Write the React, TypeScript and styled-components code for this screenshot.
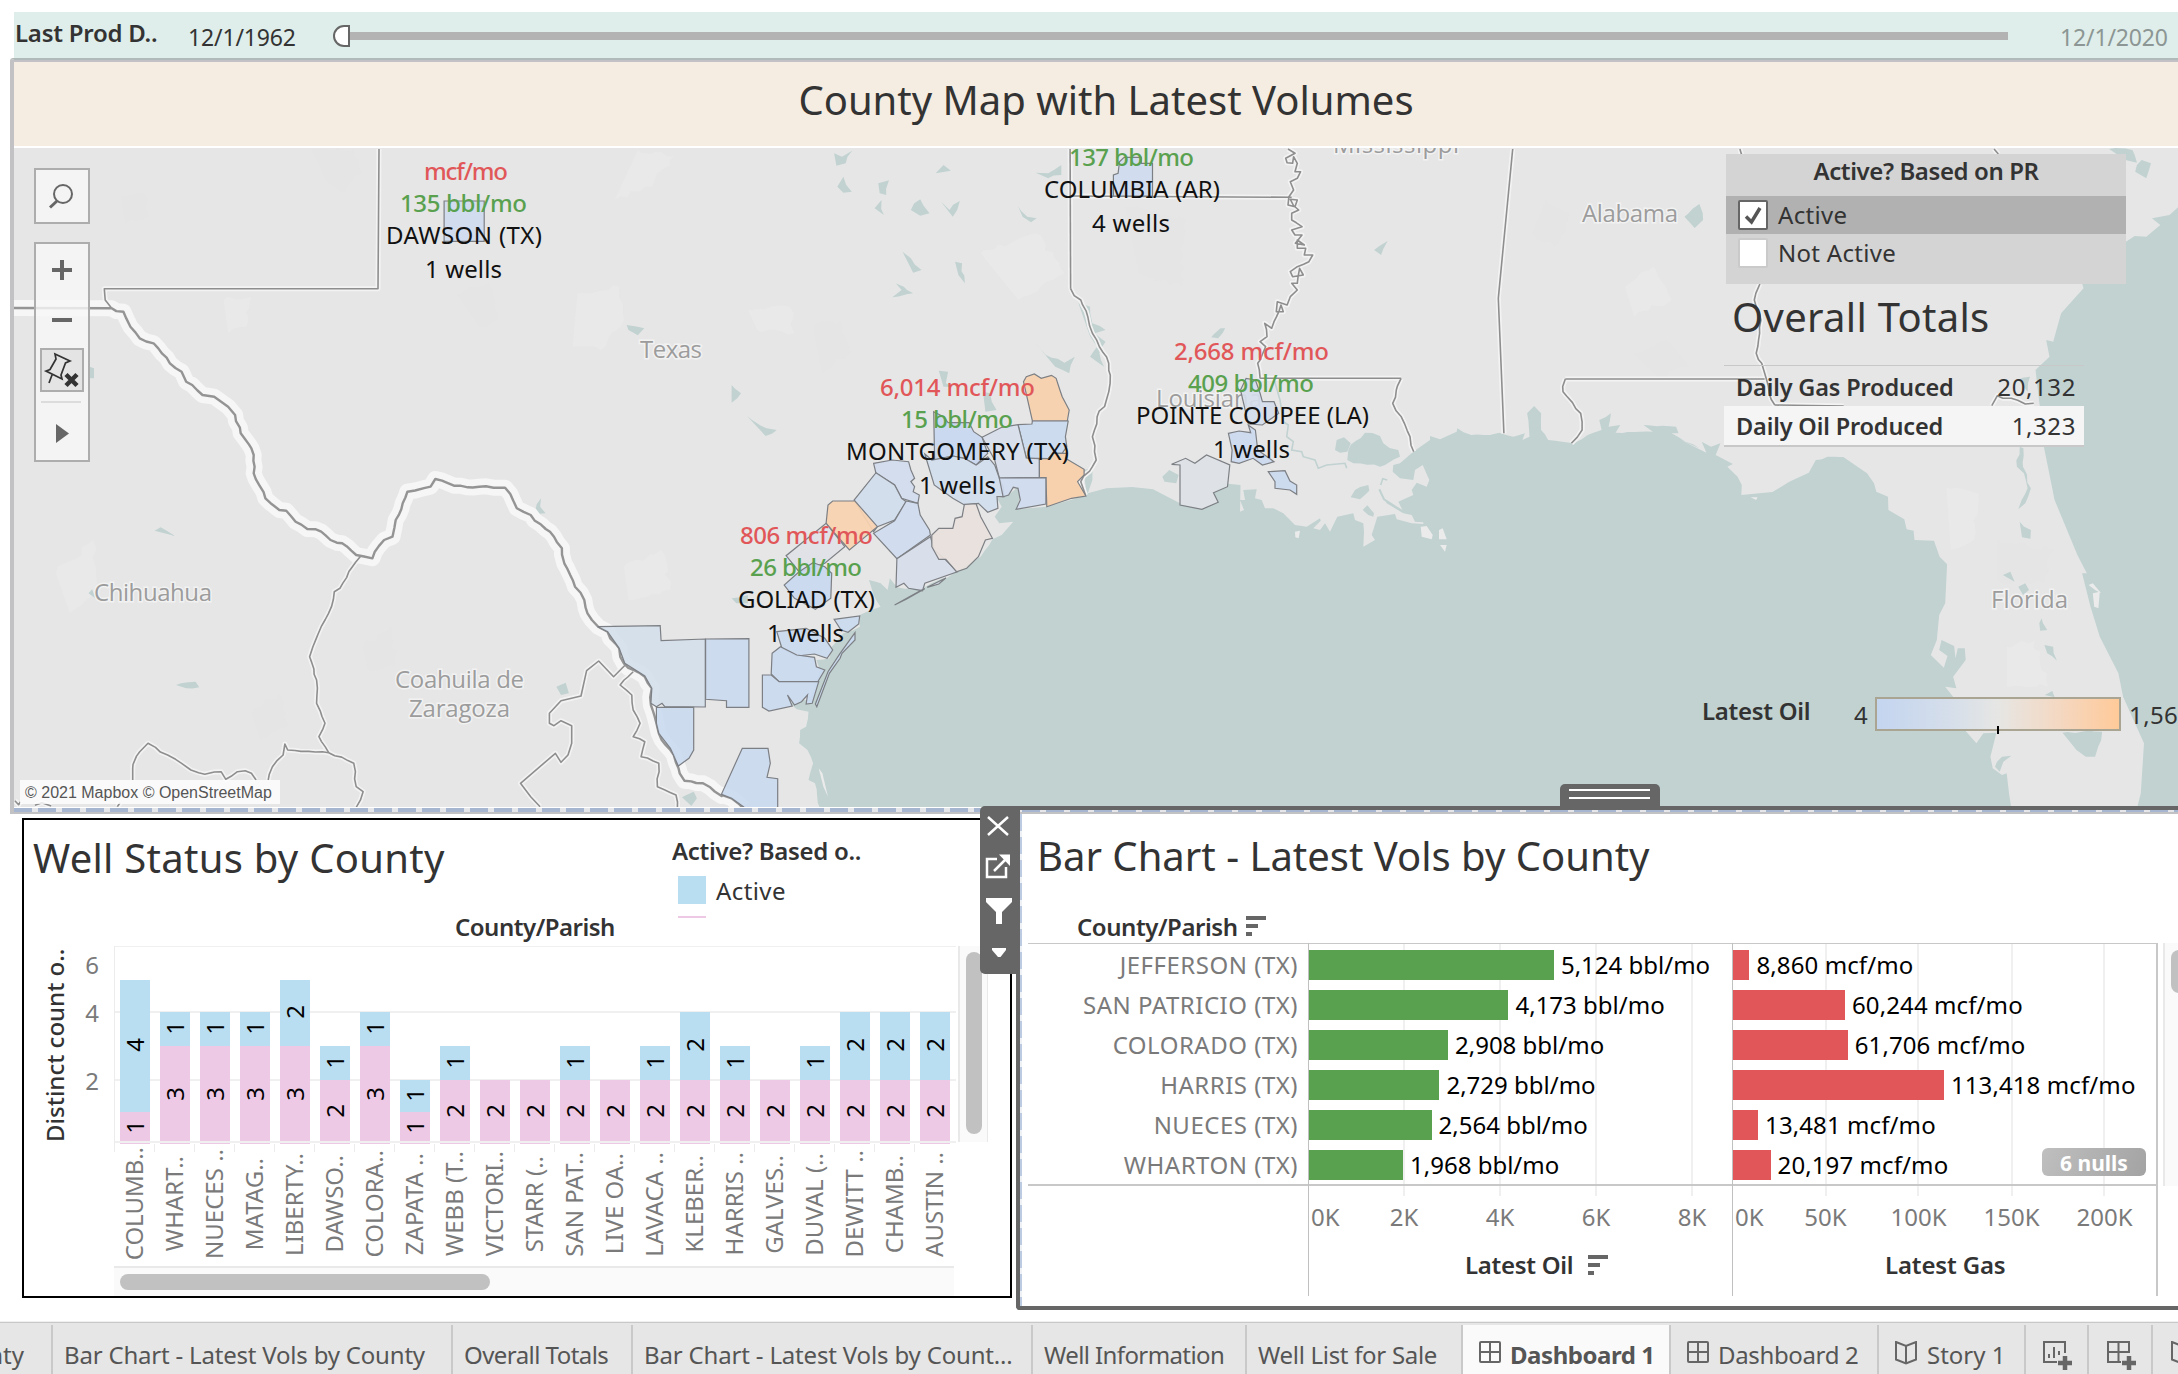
import React from "react";
import styled, { createGlobalStyle } from "styled-components";

const FONT = '"Noto Sans", "Open Sans", sans-serif';

const GlobalStyle = createGlobalStyle`
  * { box-sizing: border-box; }
  html, body { margin: 0; padding: 0; background: #fff; overflow: hidden; }
  body { font-family: ${FONT}; color: #333; font-size: 24px; line-height: 32px; white-space: nowrap; }
  svg { display: block; }
`;

/* ---------- data ---------- */

const wells: { name: string; off: number; on: number }[] = [
  { name: "COLUMB..", off: 1, on: 4 },
  { name: "WHART..", off: 3, on: 1 },
  { name: "NUECES ..", off: 3, on: 1 },
  { name: "MATAG..", off: 3, on: 1 },
  { name: "LIBERTY..", off: 3, on: 2 },
  { name: "DAWSO..", off: 2, on: 1 },
  { name: "COLORA..", off: 3, on: 1 },
  { name: "ZAPATA ..", off: 1, on: 1 },
  { name: "WEBB (T..", off: 2, on: 1 },
  { name: "VICTORI..", off: 2, on: 0 },
  { name: "STARR (..", off: 2, on: 0 },
  { name: "SAN PAT..", off: 2, on: 1 },
  { name: "LIVE OA..", off: 2, on: 0 },
  { name: "LAVACA ..", off: 2, on: 1 },
  { name: "KLEBER..", off: 2, on: 2 },
  { name: "HARRIS ..", off: 2, on: 1 },
  { name: "GALVES..", off: 2, on: 0 },
  { name: "DUVAL (..", off: 2, on: 1 },
  { name: "DEWITT ..", off: 2, on: 2 },
  { name: "CHAMB..", off: 2, on: 2 },
  { name: "AUSTIN ..", off: 2, on: 2 },
];
const LEVEL = [0, 32, 64, 98, 132, 164];

const volumes = [
  { name: "JEFFERSON (TX)", oil: 5124, gas: 8860 },
  { name: "SAN PATRICIO (TX)", oil: 4173, gas: 60244 },
  { name: "COLORADO (TX)", oil: 2908, gas: 61706 },
  { name: "HARRIS (TX)", oil: 2729, gas: 113418 },
  { name: "NUECES (TX)", oil: 2564, gas: 13481 },
  { name: "WHARTON (TX)", oil: 1968, gas: 20197 },
];

/* ---------- map geometry ---------- */

const SX = 730 / 1568;
const SY = 1 / 3;
type Pt = [number, number];

const tile = (ox: number, oy: number, sx = SX, sy = SY) => (s: string): Pt[] =>
  s.trim().split(/\s+/).map((p) => {
    const [x, y] = p.split(",").map(Number);
    return [ox + x * sx, oy + y * sy] as Pt;
  });
const west = tile(0, 0);
const mid = tile(720, 0);
const east = tile(1448, 0);
const mexico = tile(0, 440);
const gulf = tile(720, 350);
const florida = tile(1448, 440);
const delta = tile(1240, 400, SY, SY);

const rough = (pts: Pt[], amp: number, seed = 7): Pt[] => {
  let s = seed;
  const rnd = () => {
    s = (s * 16807) % 2147483647;
    return s / 2147483647 - 0.5;
  };
  const out: Pt[] = [];
  pts.forEach((p, i) => {
    out.push(p);
    const q = pts[i + 1];
    if (!q) return;
    const len = Math.hypot(q[0] - p[0], q[1] - p[1]);
    const n = Math.min(12, Math.floor(len / 6));
    for (let k = 1; k < n; k++) {
      const t = k / n;
      out.push([p[0] + (q[0] - p[0]) * t + rnd() * amp, p[1] + (q[1] - p[1]) * t + rnd() * amp]);
    }
  });
  return out;
};
const str = (pts: Pt[]) => pts.map(([x, y]) => `${x.toFixed(1)},${y.toFixed(1)}`).join(" ");

const gulfWater: Pt[] = [
  ...rough(gulf("215,1375 204,1300 190,1290 200,1240 188,1200 170,1180 172,1140 185,1130 190,1085 165,1078 150,1060 190,1050 205,1000 215,960 207,930 235,925 240,890 265,850 300,830 300,795 345,770 330,735 320,690 345,700 360,720 365,685 380,712 430,718 500,672 560,620 585,568"), 2),
  ...gulf("605,555 630,515 600,520 590,500 605,470 595,445 620,435 640,410 645,440 636,478 702,470"),
  ...gulf("785,437 785,405 780,360 800,355 800,390 790,430 830,415 885,411 930,418 988,460 1035,478 1070,455 1060,428 1080,400 1118,405"),
  ...delta("0,335 12,330 0,300 15,300 10,270 50,268 45,295 65,300 75,325 100,325 130,340 165,375 200,380 240,355 242,362 220,385 240,390 255,370 270,395 292,350 340,340 345,360 370,370 372,395 370,440 405,420 395,405 412,350 465,342 470,358 515,370 550,372 550,367 525,365 515,345 490,340 440,310 418,268 432,298 490,335 475,305 520,285 515,270 530,248 560,260 568,240 548,195 525,210 520,240 480,235 458,215 460,195 480,190 520,155 570,120 570,108 600,118 650,95"),
  ...rough(east("20,1285 50,1305 90,1305 110,1298 140,1310 165,1300 160,1320 175,1310 170,1240 185,1218 200,1240 200,1290 215,1320 245,1325 270,1330 300,1305 330,1290 325,1260 350,1240 345,1280 370,1275 360,1298 440,1295 420,1275 490,1280 495,1300 480,1300 510,1325 540,1345"), 1.5),
  ...florida("500,0 555,38 545,5 565,20 585,10 575,45 612,72 600,80 622,110 631,135 630,165 697,156 733,125 775,98 790,60 850,52 900,100 915,130 920,155 945,170 946,210 980,238 985,268 1000,272 1002,300 1044,302 1056,350 1072,373 1068,490 1055,525 1050,600 1037,645 1065,683 1073,648 1055,630 1060,600 1087,618 1090,655 1095,625 1110,625 1112,660 1085,710 1092,745 1068,740 1085,770 1110,870 1135,910 1150,880 1178,878 1165,950 1170,985 1190,1005 1200,1000 1205,1060 1210,1105"),
];
const atlantic: Pt[] = [
  ...florida("1480,1105 1488,1060 1495,910 1450,770 1440,700 1400,590 1380,500 1362,400 1372,400 1352,345 1340,305 1303,180 1280,20"),
  ...east("1278,1300 1262,1110 1292,1070 1285,1020 1300,1025 1317,940 1365,865 1362,850 1400,780 1456,725 1475,708 1500,710 1530,675 1512,655 1550,645 1568,622"),
  [2190, 207], [2190, 812],
];

const lakes: Pt[][] = [
  mid("245,460 262,470 284,452 270,490 250,497"), mid("463,520 480,495 496,512"),
  mid("252,560 265,530 283,575 265,578"), mid("340,550 363,541 357,585 343,580"),
  mid("332,625 347,600 352,645"), mid("410,630 430,598 450,640 430,647"),
  mid("475,605 493,630 515,603 500,650"), mid("640,618 660,650 680,655 668,667 650,650"),
  mid("678,518 705,520 733,495 733,525 705,535"), mid("392,755 410,775 433,810 415,818"),
  mid("370,838 415,880 370,892 390,870"), mid("505,785 520,790 526,850 512,825"),
  mid("675,1025 700,1065 740,1088 762,1070 750,1120 720,1100"), mid("770,910 795,920 800,970 828,990 805,1000 828,1025 815,1060 825,1100 795,1070 810,1040 790,990"),
  mid("25,1155 45,1180 25,1208"), mid("58,1248 100,1285 122,1290 98,1308"),
  mid("565,1175 580,1180 594,1230 570,1235"), mid("1405,750 1434,723 1420,765"),
  mid("1055,1012 1075,985 1085,985 1070,1015"), mid("470,1112 490,1115 485,1150 500,1160 480,1160"),
  delta("322,180 325,150 375,98 420,108 430,130 475,150 480,170 435,195 420,200 340,190"),
  delta("285,150 290,120 312,112 332,130 322,155 300,158"),
  delta("332,292 345,270 385,255 388,272 360,298"), delta("368,330 382,316 402,340 400,350 385,345"),
  gulf("950,380 965,360 985,375 980,400 955,395"), gulf("25,745 60,735 60,760 35,760"),
  west("1346,975 1370,980 1384,985 1370,1006 1350,990"), west("192,1100 202,1105 202,1135 192,1135"),
  mexico("332,272 345,262 376,288"), mexico("378,735 420,725 428,742 400,745"),
  mexico("1195,740 1215,728 1222,760 1205,765"), mexico("1150,210 1162,175 1160,200 1172,220 1150,222"),
  mexico("1465,1072 1490,1055 1497,1075 1485,1098"), mexico("190,460 198,448 205,475"),
  east("508,650 540,612 548,660 530,684"), east("1420,447 1470,450 1480,488 1455,480"), east("1476,515 1490,480 1510,490 1500,535"),
  east("1225,1140 1250,1130 1245,1175"), east("800,1380 815,1370 850,1372 848,1380"),
  florida("1222,80 1228,20 1236,25 1235,80 1252,145 1240,190 1225,208 1232,180 1245,145 1237,100"),
  florida("1228,245 1252,270 1251,296 1233,292"), florida("1192,405 1208,395 1217,425"),
  florida("1225,440 1240,430 1248,450 1235,465"), florida("1270,550 1275,535 1287,570 1272,572"),
  florida("1281,615 1300,620 1308,662 1287,640"), florida("1320,878 1405,875 1403,900 1390,950 1370,950 1350,930"),
  florida("1175,980 1190,950 1210,947 1193,965 1185,995"), florida("1282,765 1298,753 1303,772"),
];
const islets: Pt[][] = [
  gulf("212,1255 220,1270 232,1340 222,1310"), florida("1376,435 1385,430 1403,460 1390,450"),
  florida("1385,460 1400,455 1397,505 1388,500"), florida("650,172 665,172 662,180"),
  delta("542,380 560,378 578,405 575,418 545,410"), delta("597,390 608,385 620,418 597,418"),
  delta("600,435 620,435 615,455"), delta("165,395 180,392 176,415 166,412"),
];

const rio = rough(
  [
    ...west("32,925 240,925 265,935 280,980 300,1015 330,1030 365,1090 390,1115 400,1145 435,1185 460,1190 490,1220 505,1245 517,1300 540,1345"),
    ...mexico("545,45 545,100 570,175 600,210 615,212 635,245 660,267 690,275 710,300 735,310 765,345 800,355 805,335 825,300 843,290 850,240 865,190 875,155 925,140 935,117 975,137 1060,143 1085,143 1110,205 1140,225 1190,290 1207,325 1212,370 1235,440 1255,480 1262,520 1285,560 1305,575 1330,625 1340,670 1385,710 1400,745 1398,795 1410,850 1415,880 1440,930 1460,1000 1470,1022 1510,1030 1550,1068"),
    ...gulf("5,1335 25,1345 50,1375"),
  ].slice(1),
  2.5
);

const borders: Pt[][] = [
  west("814,447 812,866 224,866 226,900 240,925"),
  mid("752,447 753,866"),
  rough([...mid("753,866 775,900 790,950 800,1000 815,1040 835,1090 838,1150 830,1200 810,1250 800,1310"), ...gulf("808,330 800,350 775,395 785,435")], 3),
  mid("753,588 1228,592"),
  rough(mid("1220,447 1235,460 1215,475 1218,488 1230,490 1232,470 1240,490 1235,515 1247,515 1240,535 1225,545 1232,570 1222,590 1220,615 1235,620 1240,600 1225,598 1243,630 1228,640 1228,660 1250,680 1228,690 1235,705 1250,705 1236,730 1255,735 1240,720 1240,745 1258,745 1255,765 1273,765 1265,785 1240,800 1225,815 1230,830 1253,825 1245,805 1240,850 1228,850 1240,870 1225,890 1218,915 1197,905 1195,935 1210,935 1205,915 1190,965 1185,985 1170,970 1175,1010 1160,1025 1172,1040 1160,1080 1155,1090 1160,1135"), 2),
  mid("1160,1135 1463,1135"),
  rough(mid("1463,1135 1445,1210 1470,1270 1490,1355"), 3),
  east("139,447 108,895 120,1300"),
  east("627,447 632,470"),
  rough(east("670,852 658,900 672,960 662,1060 678,1110 690,1180 702,1215"), 2.5),
  east("702,1215 850,1218"),
  east("680,1137 252,1137"),
  rough(east("252,1137 247,1175 285,1240 288,1290 265,1330"), 3),
  rough(east("1168,1217 1180,1187 1210,1195 1240,1212 1258,1210"), 3),
  east("1173,447 1182,462"),
  rough(mexico("775,348 757,380 730,445 718,455 712,500 690,560 672,620 665,650 680,720 680,790 698,850 685,890 706,938"), 2),
  rough(mexico("576,1020 585,980 608,945 612,912 618,930 706,938 760,970 765,1040 780,1055 765,1102"), 2),
  rough(mexico("285,1020 285,985 300,935 318,910 360,945 390,970 410,990 440,1003 475,995 485,1018 510,995 540,1000 550,1020"), 4),
  mexico("1160,1100 1140,1070 1118,1030 1193,940 1205,967 1220,945 1228,910 1228,857 1205,842 1190,857 1180,850 1180,820 1205,782 1248,768 1260,692 1286,663 1318,710 1345,672"),
  rough(mexico("1360,695 1332,735 1357,765 1360,810 1375,850 1360,890 1385,905 1377,950 1415,970 1412,1040 1452,1065 1455,1102"), 2),
  mexico("252,1100 258,1088"),
  mexico("32,1082 40,1094 44,1085"),
  mexico("75,1096 90,1088 110,1098"),
];

const BLUE = "#cbdaf0";
const counties: { pts: Pt[]; fill: string }[] = [
  { pts: mexico("1284,560 1305,575 1330,625 1342,670 1385,708 1400,745 1398,790 1410,800 1422,790 1428,800 1515,801 1515,597 1420,602 1418,557"), fill: "#d5dfeb" },
  { pts: gulf("-31,867 62,866 62,1072 14,1072 14,1052 -31,1048"), fill: BLUE },
  { pts: mexico("1410,802 1490,802 1490,930 1480,955 1457,978 1440,925 1415,880 1410,850"), fill: BLUE },
  { pts: gulf("48,1195 103,1195 108,1240 101,1282 124,1286 124,1375 55,1375 25,1345 3,1333"), fill: BLUE },
  { pts: west("954,603 1040,603 1040,724 954,724"), fill: "#cfdcef" },
  { pts: mid("858,485 868,472 905,472 905,490 929,490 929,588 845,588 845,525 855,520"), fill: "#cfdcef" },
  { pts: gulf("652,95 658,80 675,72 690,85 712,76 722,85 730,120 735,140 750,180 746,213 671,213"), fill: "#f9d0ab" },
  { pts: gulf("640,224 670,222 671,213 748,213 742,260 745,290 735,310 715,310 705,326 658,324"), fill: BLUE },
  { pts: gulf("459,185 480,200 490,218 535,218 545,245 563,262 575,310 550,345 525,325 500,318 461,330"), fill: "#c8d8f0" },
  { pts: gulf("563,262 605,232 640,224 658,324 686,326 686,383 600,384 590,330"), fill: "#d8dfec" },
  { pts: gulf("440,312 455,330 500,318 525,325 550,345 575,320 590,345 600,384 608,410 610,440 595,440 597,475 575,487 555,460 525,465 500,445 460,405"), fill: "#d2deee" },
  { pts: gulf("686,326 705,326 715,310 745,310 742,325 782,358 782,375 768,395 786,438 755,445 702,470 700,383 686,383"), fill: "#f9cfa9" },
  { pts: gulf("600,384 700,383 700,462 636,478 645,450 640,415 630,412 620,435 608,440"), fill: "#cfdcef" },
  { pts: gulf("330,340 370,330 405,335 410,360 418,385 410,395 418,410 415,425 428,435 425,460 390,445 375,405 335,370"), fill: "#d1dcee" },
  { pts: gulf("335,368 375,405 390,445 400,455 375,510 338,530 330,545 288,450"), fill: "#d1ddee" },
  { pts: gulf("400,453 425,460 430,495 450,540 452,555 380,626 330,550 375,512"), fill: "#cfdcef" },
  { pts: gulf("242,453 290,453 338,530 278,600 228,520 232,465"), fill: "#f8d2b0" },
  { pts: gulf("228,520 268,590 225,640 170,665 142,617"), fill: "#e0e2e7" },
  { pts: gulf("200,638 225,650 240,670 238,745 205,778 160,745 138,705 170,665"), fill: "#c9d9f0" },
  { pts: gulf("380,626 452,560 460,600 485,630 510,665 440,700 435,722 405,715 395,700 378,712"), fill: "#d8ddeb" },
  { pts: gulf("525,463 550,461 560,500 585,565 570,570 555,620 530,655 508,665 485,628 470,628 455,590 455,555 470,535 500,535 505,505 520,500"), fill: "#e9e1dc" },
  { pts: gulf("245,808 300,798 298,822 275,847 260,840"), fill: BLUE },
  { pts: gulf("122,845 185,835 225,865 242,900 230,925 203,912 165,918 133,895"), fill: BLUE },
  { pts: gulf("112,910 130,890 165,915 203,922 207,950 225,960 210,995 127,995 110,972"), fill: BLUE },
  { pts: gulf("91,975 110,975 127,995 212,995 198,1060 185,1062 188,1035 175,1055 160,1065 145,1035 155,1068 105,1083 91,1072"), fill: BLUE },
  { pts: gulf("290,848 290,870 262,910 258,925 235,970 208,1070 205,1062 232,965 258,910"), fill: BLUE },
  { pts: gulf("375,765 430,722 440,716 400,748"), fill: "#d8ddeb" },
  { pts: gulf("445,712 485,684 470,702"), fill: "#d8ddeb" },
  { pts: gulf("970,343 1000,325 1020,340 1045,315 1095,345 1090,410 1060,428 1070,457 1035,478 988,465 988,345"), fill: "#dde2e6" },
  { pts: gulf("1118,120 1130,85 1150,90 1160,130 1165,155 1190,155 1200,190 1165,225 1135,222"), fill: "#d5ddec" },
  { pts: gulf("1092,250 1115,243 1140,248 1135,226 1150,240 1155,300 1190,335 1165,345 1145,325 1115,340 1098,335 1100,300"), fill: "#ccdaf0" },
  { pts: delta("85,215 135,212 150,243 170,255 170,283 150,270 105,265 105,245"), fill: "#cbdaf0" },
];

const relief: Pt[][] = [
  west("670,450 760,450 780,520 740,580 700,540"), west("1240,880 1330,860 1340,960 1290,1050 1230,1040"),
  west("260,590 310,580 320,650 270,670"), west("1370,450 1450,470 1400,560 1320,600"),
  west("980,880 1050,850 1070,960 1030,980"), west("480,900 540,890 530,980 490,1000"),
  mid("200,980 260,960 280,1060 220,1120"), mid("560,760 680,700 740,820 640,900"),
  mid("870,620 1000,660 990,860 900,820"), mid("60,930 150,920 160,1000 80,990"),
  east("210,600 260,640 230,740 180,700"), east("380,860 440,800 480,900 400,950"),
  east("400,1060 470,1020 520,1100 450,1130"), mexico("120,400 200,300 210,460 150,520"),
  mexico("780,620 840,560 850,680 790,690"), mexico("1340,380 1420,330 1440,450 1350,480"),
  mexico("540,820 600,760 620,860 560,900"), florida("1070,140 1140,160 1130,300 1080,330"),
  florida("1180,300 1300,330 1280,430 1180,420"), florida("1200,620 1260,600 1290,740 1200,740"),
];

const annotations: [string, number, number, number, string][] = [
  ["mcf/mo", 424, 508, 180, "#e15759"],
  ["135 bbl/mo", 400, 527, 212, "#59a14f"],
  ["DAWSON (TX)", 386, 542, 244, "#111"],
  ["1 wells", 425, 502, 278, "#111"],
  ["137 bbl/mo", 1069, 1194, 166, "#59a14f"],
  ["COLUMBIA (AR)", 1044, 1220, 198, "#111"],
  ["4 wells", 1092, 1170, 232, "#111"],
  ["2,668 mcf/mo", 1174, 1329, 360, "#e15759"],
  ["409 bbl/mo", 1188, 1314, 392, "#59a14f"],
  ["POINTE COUPEE (LA)", 1136, 1369, 424, "#111"],
  ["1 wells", 1213, 1290, 458, "#111"],
  ["6,014 mcf/mo", 880, 1035, 396, "#e15759"],
  ["15 bbl/mo", 901, 1013, 428, "#59a14f"],
  ["MONTGOMERY (TX)", 846, 1069, 460, "#111"],
  ["1 wells", 919, 996, 494, "#111"],
  ["806 mcf/mo", 740, 873, 544, "#e15759"],
  ["26 bbl/mo", 750, 862, 576, "#59a14f"],
  ["GOLIAD (TX)", 738, 875, 608, "#111"],
  ["1 wells", 767, 844, 642, "#111"],
];
const places: [string, number, number, number][] = [
  ["Texas", 640, 702, 358],
  ["Chihuahua", 94, 212, 601],
  ["Coahuila de", 395, 524, 688],
  ["Zaragoza", 409, 510, 717],
  ["Louisiana", 1156, 1262, 407],
  ["Alabama", 1582, 1678, 222],
  ["Mississippi", 1333, 1459, 153],
  ["Florida", 1991, 2068, 608],
];

const PlaceText = styled.text`
  font: 400 24px "Open Sans", "Noto Sans", sans-serif;
  fill: #9c9c9c;
  stroke: #f2f2f2;
  stroke-width: 3px;
  paint-order: stroke;
`;
const NoteText = styled.text<{ $strong: boolean }>`
  font: ${(p) => (p.$strong ? 500 : 400)} 24px ${FONT};
`;

function CountyMap() {
  return (
    <svg width="2164" height="659" viewBox="14 148 2164 659">
      <rect x="14" y="148" width="2164" height="659" fill="#e6e6e6" />
      {relief.map((p, i) => (
        <polygon key={i} points={str(rough(p, 6, i + 3))} fill={i % 2 ? "#e9e9e9" : "#e4e4e4"} opacity=".75" />
      ))}
      <g fill="#c1d2d1">
        {lakes.map((p, i) => (
          <polygon key={i} points={str(rough(p, 3, i + 11))} />
        ))}
        <polygon points={str(gulfWater)} />
        <polygon points={str(atlantic)} />
      </g>
      <g fill="none" stroke="#c1d2d1" strokeWidth="1.6">
        <polyline points={str(delta("100,-70 120,0 130,65 145,75 140,110 160,125 155,150 185,155 190,170 225,180 235,205 260,195 315,190 320,205"))} />
        <polyline points={str(delta("418,268 432,298 490,335"))} strokeWidth="2" />
        <polyline points={str(delta("422,255 428,236 442,240"))} />
      </g>
      <g fill="#ebebeb">
        {islets.map((p, i) => (
          <polygon key={i} points={str(p)} />
        ))}
      </g>
      <g fill="none" strokeLinejoin="round">
        {borders.map((p, i) => (
          <polyline key={i} points={str(p)} stroke="#f3f3f3" strokeWidth="5" />
        ))}
        <polyline points={str([[14, 308], ...rio])} stroke="#f6f6f6" strokeWidth="16" />
        {borders.map((p, i) => (
          <polyline key={i} points={str(p)} stroke="#8e8e8e" strokeWidth="1.6" />
        ))}
        <polyline points={str([[14, 308], ...rio])} stroke="#949494" strokeWidth="2.4" />
      </g>
      {places.map(([t, a, b, y]) => (
        <PlaceText key={t} x={a} y={y} textLength={b - a}>{t}</PlaceText>
      ))}
      <g stroke="#7c7f84" strokeWidth="1.2" fillOpacity=".92">
        {counties.map((c, i) => (
          <polygon key={i} points={str(c.pts)} fill={c.fill} />
        ))}
      </g>
      {annotations.map(([t, a, b, y, c], i) => (
        <NoteText key={i} $strong={c !== "#111"} x={a} y={y} textLength={b - a} fill={c}>{t}</NoteText>
      ))}
    </svg>
  );
}

/* ---------- shared ---------- */

const Text = styled.span<{ $size?: number; $weight?: number; $color?: string; $track?: number }>`
  font-size: ${(p) => p.$size ?? 24}px;
  font-weight: ${(p) => p.$weight ?? 400};
  color: ${(p) => p.$color ?? "#333"};
  letter-spacing: ${(p) => p.$track ?? 0}px;
`;

const Page = styled.div`
  width: 2178px;
  height: 1374px;
  overflow: hidden;
  display: flex;
  flex-direction: column;
  background: #fff;
`;

/* ---------- date slider ---------- */

const DateBar = styled.div`
  margin: 12px 0 0 14px;
  height: 46px;
  flex: none;
  background: #dfeeea;
  display: flex;
  align-items: flex-start;
`;
const DateTitle = styled.div`width: 174px; padding: 5px 0 0 1px; line-height: 32px;`;
const DateStart = styled.div`width: 145px; padding-top: 9px;`;
const DateEnd = styled.div`padding: 9px 0 0 52px;`;
const Knob = styled.div`
  width: 17px;
  height: 22px;
  margin-top: 13px;
  background: #fff;
  border: 2px solid #666;
  border-radius: 12px 0 0 12px;
`;
const Track = styled.div`
  width: 1658px;
  height: 8px;
  margin-top: 20px;
  background: #b3b3b3;
`;

/* ---------- map panel ---------- */

const MapPanel = styled.div`
  position: relative;
  margin-left: 10px;
  flex: none;
  height: 756px;
  border-left: 4px solid #c2c2c4;
  border-top: 2px solid #b0bab8;
  border-bottom: 2px solid #c2c2c4;
  border-top-left-radius: 3px;
  display: flex;
  flex-direction: column;
`;
const MapTitle = styled.div`
  height: 86px;
  border-top: 2px solid #c2c2c6;
  background: #f6ede2;
  text-align: center;
  line-height: 75px;
  padding-left: 20px;
`;
const MapBody = styled.div`
  margin-top: 2px;
  height: 659px;
  overflow: hidden;
`;
const Dashes = styled.div`
  margin-top: 1px;
  height: 4px;
  background: repeating-linear-gradient(90deg, #a6b5d0 0 18px, #e4e6ea 18px 24px);
`;
const MapTools = styled.div`
  position: absolute;
  left: 20px;
  top: 108px;
  display: flex;
  flex-direction: column;
  gap: 18px;
`;
const ToolBox = styled.div<{ $h: number }>`
  width: 56px;
  height: ${(p) => p.$h}px;
  border: 2px solid #adadad;
  background: rgba(248, 248, 248, 0.8);
`;
const Attribution = styled.div`
  position: absolute;
  left: 6px;
  top: 720px;
  width: 260px;
  height: 24px;
  padding-left: 5px;
  background: rgba(255, 255, 255, 0.8);
  font: 16px/25px "Liberation Sans", Arial, sans-serif;
  color: #555;
`;

const FilterCard = styled.div`
  position: absolute;
  left: 1712px;
  top: 94px;
  width: 400px;
  height: 130px;
  background: #d4d4d4;
`;
const FilterTitle = styled.div`height: 42px; line-height: 34px; text-align: center;`;
const FilterRow = styled.div<{ $on?: boolean }>`
  height: 38px;
  padding-left: 12px;
  display: flex;
  align-items: center;
  gap: 10px;
  background: ${(p) => (p.$on ? "#b1b1b1" : "transparent")};
`;
const Box = styled.span<{ $on?: boolean }>`
  width: 30px;
  height: 30px;
  background: #fff;
  border: 2px solid ${(p) => (p.$on ? "#666" : "#cacaca")};
  border-radius: 2px;
`;
const Totals = styled.div`
  position: absolute;
  left: 1710px;
  top: 236px;
  width: 360px;
`;
const TotalsTitle = styled.div`height: 69px; padding: 0 0 0 8px; line-height: 42px;`;
const TotalsRow = styled.div<{ $hot?: boolean }>`
  height: 41px;
  display: flex;
  justify-content: space-between;
  align-items: center;
  padding: 1px 8px 0 12px;
  background: ${(p) => (p.$hot ? "#f5f5f5" : "transparent")};
  border-top: ${(p) => (p.$hot ? "0" : "1px solid #c8c8c8")};
  border-bottom: ${(p) => (p.$hot ? "2px solid #c8c8c8" : "0")};
`;
const Legend = styled.div`
  position: absolute;
  left: 1688px;
  top: 637px;
  display: flex;
  align-items: flex-start;
`;
const LegendTitle = styled.div`width: 152px; height: 32px; margin-top: -2px;`;
const LegendMin = styled.div`width: 21px; padding-top: 2px;`;
const LegendMax = styled.div`padding: 2px 0 0 8px;`;
const Ramp = styled.div`
  position: relative;
  width: 246px;
  height: 34px;
  border: 2px solid #aaa493;
  background: linear-gradient(90deg, #c4d5f0, #d5deea 30%, #e6e6e4 50%, #f4d8c2 75%, #ffca99);
  &::after {
    content: "";
    position: absolute;
    left: 120px;
    top: 27px;
    width: 2px;
    height: 8px;
    background: #000;
  }
`;
const DragHandle = styled.div`
  position: absolute;
  left: 1546px;
  top: 724px;
  width: 100px;
  height: 24px;
  background: #666;
  border-radius: 5px 5px 0 0;
  padding: 5px 10px 0 9px;
  display: grid;
  grid-template-rows: 2px 2px;
  gap: 6px;
`;
const Line = styled.i`background: #fff;`;

/* ---------- lower row ---------- */

const Lower = styled.div`
  display: flex;
  height: 508px;
  flex: none;
`;
const StatusPanel = styled.div`
  margin: 4px 0 0 22px;
  width: 990px;
  height: 480px;
  border: 2px solid #000;
`;
const StatusHead = styled.div`
  height: 126px;
  display: grid;
  grid-template-columns: 648px 1fr;
  grid-template-rows: 90px 36px;
`;
const StatusTitle = styled.div`padding: 0 0 0 9px; line-height: 76px;`;
const StatusLegend = styled.div`
  grid-row: 1 / span 2;
  grid-column: 2;
  padding-top: 15px;
  height: 98px;
  overflow: hidden;
`;
const LegendItem = styled.div<{ $gap: number }>`
  display: flex;
  align-items: center;
  gap: 10px;
  padding-left: 6px;
  margin-top: ${(p) => p.$gap}px;
  height: 28px;
  & > span { padding-top: 2px; }
`;
const Swatch = styled.i<{ $c: string }>`width: 28px; height: 28px; background: ${(p) => p.$c};`;
const StatusColumn = styled.div`padding-left: 431px; line-height: 34px;`;
const StatusBody = styled.div`display: flex; height: 198px;`;
const YTitle = styled.div`
  width: 46px;
  height: 196px;
  display: flex;
  justify-content: flex-end;
`;
const Vertical = styled.span`
  writing-mode: vertical-rl;
  transform: rotate(180deg);
  line-height: 30px;
`;
const YAxis = styled.div`
  width: 44px;
  display: grid;
  grid-template-rows: 38px 58px 78px;
  align-items: center;
  justify-items: end;
  padding-right: 15px;
`;
const Plot = styled.div`
  position: relative;
  width: 842px;
  height: 198px;
  border-left: 1px solid #ececec;
  background:
    linear-gradient(#f0f0f0, #f0f0f0) 0 0 / 100% 1px no-repeat,
    linear-gradient(#f0f0f0, #f0f0f0) 0 65px / 100% 2px no-repeat,
    linear-gradient(#f0f0f0, #f0f0f0) 0 133px / 100% 2px no-repeat;
  padding-left: 5px;
  display: flex;
  gap: 10px;
  align-items: flex-end;
  &::after {
    content: "";
    position: absolute;
    left: 0;
    right: 0;
    bottom: 1px;
    height: 2px;
    background: #f0f0f0;
  }
`;
const Stack = styled.div`width: 30px;`;
const Segment = styled.div<{ $c: string }>`
  background: ${(p) => p.$c};
  display: flex;
  align-items: center;
  justify-content: center;
  padding-bottom: 3px;
`;
const VScroll = styled.div`
  margin-left: 2px;
  width: 30px;
  height: 196px;
  border: solid #e9e9e9;
  border-width: 0 1px 0 2px;
  background: #fafafa;
  padding: 6px;
`;
const VThumb = styled.div`width: 16px; height: 182px; border-radius: 8px; background: #c1c1c1;`;
const Names = styled.div`
  margin-left: 90px;
  width: 841px;
  height: 122px;
  display: flex;
`;
const NameCell = styled.div`
  width: 40px;
  height: 122px;
  flex: none;
  display: flex;
  align-items: center;
  justify-content: center;
  padding-bottom: 2px;
  background: linear-gradient(#ececec, #ececec) 0 0 / 1px 8px no-repeat;
`;
const HScroll = styled.div`
  margin-left: 90px;
  width: 840px;
  height: 30px;
  border-top: 2px solid #e9e9e9;
  background: #fafafa;
  padding: 6px;
`;
const HThumb = styled.div`width: 370px; height: 16px; border-radius: 8px; background: #c1c1c1;`;

/* ---------- volumes panel ---------- */

const VolumePanel = styled.div`
  position: relative;
  margin-left: 4px;
  width: 1162px;
  height: 496px;
  border-left: 4px solid #666;
  border-bottom: 4px solid #666;
  border-bottom-left-radius: 4px;
  background: repeating-linear-gradient(180deg, #bccae2 0 17px, #eef1f6 17px 23px) 0 0 / 2px 100% no-repeat;
  &::before {
    content: "";
    position: absolute;
    left: -4px;
    top: -8px;
    right: 0;
    height: 4px;
    background: #666;
  }
`;
const VolumeTitle = styled.div`height: 84px; padding-left: 17px; line-height: 84px;`;
const VolumeHead = styled.div`
  height: 45px;
  padding-left: 57px;
  display: flex;
  align-items: flex-start;
  gap: 8px;
`;
const HeadText = styled.div`line-height: 32px; padding-top: 13px;`;
const HeadIcon = styled.div`padding-top: 18px;`;
const VolumeGrid = styled.div`display: flex; height: 353px; padding-left: 8px;`;
const NameColumn = styled.div`
  width: 280px;
  flex: none;
  height: 243px;
  border: solid #c8c8c8;
  border-width: 1px 0 2px;
  padding: 1px 10px 0 0;
  text-align: right;
`;
const Row = styled.div`height: 40px; line-height: 40px;`;
const ValueColumn = styled.div<{ $w: number; $lines: number[] }>`
  width: ${(p) => p.$w}px;
  flex: none;
  height: 353px;
  border-left: 1px solid #c0c0c0;
  background: ${(p) =>
    p.$lines.map((x) => `linear-gradient(#f0f0f0, #f0f0f0) ${x - 2}px 0 / 2px 253px no-repeat`).join(", ")};
`;
const Bars = styled.div`
  height: 243px;
  border: solid #c8c8c8;
  border-width: 1px 0 2px;
  padding-top: 1px;
`;
const BarRow = styled.div`height: 40px; display: flex; align-items: center; gap: 7px;`;
const Bar = styled.i<{ $c: string }>`height: 30px; background: ${(p) => p.$c};`;
const Axis = styled.div<{ $first: number; $slot: number }>`
  height: 62px;
  display: grid;
  grid-template-columns: ${(p) => `${p.$first}px repeat(4, ${p.$slot}px)`};
  align-items: center;
  justify-items: center;
  line-height: 62px;
  & > :first-child { justify-self: start; padding-left: 2px; }
`;
const AxisTitle = styled.div<{ $left: number }>`
  padding-left: ${(p) => p.$left}px;
  height: 34px;
  display: flex;
  align-items: center;
  gap: 15px;
`;
const SideScroll = styled.div`
  margin-left: 5px;
  flex: none;
  width: 30px;
  height: 243px;
  overflow: hidden;
  border-left: 2px solid #e9e9e9;
  background: #fafafa;
  padding: 7px 0 0 6px;
`;
const SideThumb = styled.div`width: 16px; height: 43px; border-radius: 8px; background: #c1c1c1;`;
const GridEnd = styled.div`width: 2px; flex: none; background: #c8c8c8;`;
const Nulls = styled.div`
  position: absolute;
  left: 1022px;
  top: 334px;
  width: 104px;
  height: 28px;
  border-radius: 6px;
  background: linear-gradient(115deg, #bfbfbf, #a3a3a3);
  text-align: center;
  line-height: 27px;
`;
const PanelTools = styled.div`
  position: absolute;
  left: -40px;
  top: -8px;
  width: 40px;
  height: 168px;
  background: #666;
  border-radius: 5px 0 0 5px;
`;

/* ---------- tabs ---------- */

const TabBar = styled.div`
  height: 52px;
  flex: none;
  display: flex;
  background: #e6e6e6;
  border-top: 1px solid #c8c8c8;
  box-shadow: 0 -1px 0 #f0f0f0;
  padding-top: 2px;
`;
const Tab = styled.div<{ $w: number; $on?: boolean; $pad?: number }>`
  width: ${(p) => p.$w}px;
  flex: none;
  height: 49px;
  padding-left: ${(p) => p.$pad ?? 11}px;
  border-right: 2px solid #c9c9c9;
  background: ${(p) => (p.$on ? "#fafafa" : "transparent")};
  display: flex;
  align-items: flex-start;
  gap: 9px;
`;
const CutTab = styled(Tab)`justify-content: flex-end; padding: 0 27px 0 0; overflow: hidden;`;
const TabLabel = styled.div`height: 46px; line-height: 59px;`;
const TabIcon = styled.div`padding-top: 16px;`;

const SortIcon = () => (
  <svg width="20" height="20" viewBox="0 0 20 20" fill="#666">
    <path d="M0 0h20v4H0zM0 8h12v4H0zM0 16h6v4H0z" />
  </svg>
);
const DashIcon = () => (
  <svg width="22" height="22" viewBox="0 0 22 22" fill="none" stroke="#666" strokeWidth="2">
    <rect x="1" y="1" width="20" height="20" rx="1" />
    <path d="M11 1v20M1 11h20" />
  </svg>
);
const StoryIcon = () => (
  <svg width="24" height="24" viewBox="0 0 24 24" fill="none" stroke="#666" strokeWidth="2">
    <path d="M2 1 L12 5 L22 1 V18.500 L12 22.500 L2 18.500 Z M12 5 V22" />
  </svg>
);

export default function App() {
  return (
    <>
      <GlobalStyle />
      <Page>
        <DateBar>
          <DateTitle><Text $weight={600} $track={-0.25}>Last Prod D..</Text></DateTitle>
          <DateStart><Text $size={23} $track={-0.15}>12/1/1962</Text></DateStart>
          <Knob />
          <Track />
          <DateEnd><Text $size={23} $track={-0.15} $color="#8c9694">12/1/2020</Text></DateEnd>
        </DateBar>

        <MapPanel>
          <MapTitle><Text $size={40}>County Map with Latest Volumes</Text></MapTitle>
          <MapBody><CountyMap /></MapBody>
          <Dashes />
          <MapTools>
            <ToolBox $h={56}>
              <svg width="52" height="52" viewBox="0 0 52 52" fill="none" stroke="#666" strokeWidth="2">
                <circle cx="27" cy="24" r="9" />
                <path d="M21 31 L14 37.500" strokeWidth="3" />
              </svg>
            </ToolBox>
            <ToolBox $h={220}>
              <svg width="52" height="216" viewBox="0 0 52 216">
                <path d="M24 16h4v8h8v4h-8v8h-4v-8h-8v-4h8z M16 74h20v4H16z" fill="#666" />
                <rect x="5" y="105" width="42" height="42" fill="#e4e4e4" stroke="#adadad" strokeWidth="2" />
                <path d="M19 110 L34 117 L29.500 119 L25 131 L26 135 L10 127 L14 125.500 L20 115 Z M16 131 L13 139" fill="none" stroke="#333" strokeWidth="1.700" />
                <path d="M30 130.500 L41 141.500 M41 130.500 L30 141.500" stroke="#333" strokeWidth="4.500" />
                <path d="M5 158h40" stroke="#dcdcdc" strokeWidth="2" />
                <path d="M20 180 L33 189.500 L20 199 Z" fill="#666" />
              </svg>
            </ToolBox>
          </MapTools>
          <Attribution>© 2021 Mapbox © OpenStreetMap</Attribution>
          <FilterCard>
            <FilterTitle><Text $weight={600} $track={-0.4}>Active? Based on PR</Text></FilterTitle>
            <FilterRow $on>
              <Box $on>
                <svg width="26" height="26" viewBox="0 0 26 26" fill="none" stroke="#555" strokeWidth="3.500">
                  <path d="M6 14.500 L11.500 20 L20 6" />
                </svg>
              </Box>
              <Text $track={0.3}>Active</Text>
            </FilterRow>
            <FilterRow>
              <Box />
              <Text $track={0.3}>Not Active</Text>
            </FilterRow>
          </FilterCard>
          <Totals>
            <TotalsTitle><Text $size={40} $track={0.3}>Overall Totals</Text></TotalsTitle>
            <TotalsRow><Text $weight={600} $size={23.5} $track={-0.15}>Daily Gas Produced</Text><Text $track={0.6}>20,132</Text></TotalsRow>
            <TotalsRow $hot><Text $weight={600} $size={23.5} $track={-0.15}>Daily Oil Produced</Text><Text $track={0.6}>1,323</Text></TotalsRow>
          </Totals>
          <Legend>
            <LegendTitle><Text $weight={600} $track={-0.3}>Latest Oil</Text></LegendTitle>
            <LegendMin><Text>4</Text></LegendMin>
            <Ramp />
            <LegendMax><Text $track={0.4}>1,56</Text></LegendMax>
          </Legend>
          <DragHandle><Line /><Line /></DragHandle>
        </MapPanel>

        <Lower>
          <StatusPanel>
            <StatusHead>
              <StatusTitle><Text $size={40} $track={0.27}>Well Status by County</Text></StatusTitle>
              <StatusLegend>
                <Text $weight={600} $track={-0.3}>Active? Based o..</Text>
                <LegendItem $gap={9}><Swatch $c="#b9ddf1" /><Text $track={0.4}>Active</Text></LegendItem>
                <LegendItem $gap={12}><Swatch $c="#eec9e5" /></LegendItem>
              </StatusLegend>
              <StatusColumn><Text $weight={600} $track={-0.5}>County/Parish</Text></StatusColumn>
            </StatusHead>
            <StatusBody>
              <YTitle><Vertical><Text $weight={500}>Distinct count o..</Text></Vertical></YTitle>
              <YAxis>
                {["6", "4", "2"].map((n) => <Text key={n} $color="#7a7a7a">{n}</Text>)}
              </YAxis>
              <Plot>
                {wells.map((w) => (
                  <Stack key={w.name}>
                    {w.on > 0 && (
                      <Segment $c="#b9ddf1" style={{ height: LEVEL[w.on + w.off] - LEVEL[w.off] }}>
                        <Vertical><Text $color="#000">{w.on}</Text></Vertical>
                      </Segment>
                    )}
                    <Segment $c="#eec9e5" style={{ height: LEVEL[w.off] }}>
                      <Vertical><Text $color="#000">{w.off}</Text></Vertical>
                    </Segment>
                  </Stack>
                ))}
              </Plot>
              <VScroll><VThumb /></VScroll>
            </StatusBody>
            <Names>
              {wells.map((w) => (
                <NameCell key={w.name}>
                  <Vertical><Text $color="#7a7a7a">{w.name}</Text></Vertical>
                </NameCell>
              ))}
            </Names>
            <HScroll><HThumb /></HScroll>
          </StatusPanel>

          <VolumePanel>
            <VolumeTitle><Text $size={40}>Bar Chart - Latest Vols by County</Text></VolumeTitle>
            <VolumeHead>
              <HeadText><Text $weight={600} $track={-0.45}>County/Parish</Text></HeadText>
              <HeadIcon><SortIcon /></HeadIcon>
            </VolumeHead>
            <VolumeGrid>
              <NameColumn>
                {volumes.map((v) => <Row key={v.name}><Text $color="#7a7a7a" $track={0.5}>{v.name}</Text></Row>)}
              </NameColumn>
              <ValueColumn $w={424} $lines={[96, 192, 288, 384]}>
                <Bars>
                  {volumes.map((v) => (
                    <BarRow key={v.name}>
                      <Bar $c="#59a14f" style={{ width: v.oil * 0.0478 }} />
                      <Text $color="#000">{v.oil.toLocaleString("en-US")} bbl/mo</Text>
                    </BarRow>
                  ))}
                </Bars>
                <Axis $first={47} $slot={96}>
                  {["0K", "2K", "4K", "6K", "8K"].map((t) => <Text key={t} $color="#7a7a7a">{t}</Text>)}
                </Axis>
                <AxisTitle $left={156}><Text $weight={600} $track={-0.3}>Latest Oil</Text><SortIcon /></AxisTitle>
              </ValueColumn>
              <ValueColumn $w={424} $lines={[94, 186, 280, 372]}>
                <Bars>
                  {volumes.map((v) => (
                    <BarRow key={v.name}>
                      <Bar $c="#e15759" style={{ width: v.gas * 0.00186 }} />
                      <Text $color="#000" $track={0.1}>{v.gas.toLocaleString("en-US")} mcf/mo</Text>
                    </BarRow>
                  ))}
                </Bars>
                <Axis $first={46} $slot={93}>
                  {["0K", "50K", "100K", "150K", "200K"].map((t) => <Text key={t} $color="#7a7a7a">{t}</Text>)}
                </Axis>
                <AxisTitle $left={152}><Text $weight={600} $track={-0.15}>Latest Gas</Text></AxisTitle>
              </ValueColumn>
              <GridEnd />
              <SideScroll><SideThumb /></SideScroll>
            </VolumeGrid>
            <Nulls><Text $size={21} $weight={700} $color="#fff">6 nulls</Text></Nulls>
            <PanelTools>
              <svg width="40" height="168" viewBox="0 0 40 168" fill="none" stroke="#fff" strokeWidth="2.500">
                <path d="M8 11 L28 29 M28 11 L8 29" />
                <path d="M17 53 H7 V71 H26 V61 M14 65 L28 51" />
                <path d="M19 48.500 H30 V60 Z" fill="#fff" stroke="none" />
                <path d="M6 92 H32 V96 L22 106 V118 H16 V106 L6 96 Z" fill="#fff" stroke="none" />
                <path d="M12 142 H26 V144 L20.500 151 H18 L12 144 Z" fill="#fff" stroke="none" />
              </svg>
            </PanelTools>
          </VolumePanel>
        </Lower>

        <TabBar>
          <CutTab $w={53}><TabLabel><Text $color="#555">County</Text></TabLabel></CutTab>
          <Tab $w={400}><TabLabel><Text $color="#555" $track={-0.2}>Bar Chart - Latest Vols by County</Text></TabLabel></Tab>
          <Tab $w={180}><TabLabel><Text $color="#555" $track={-0.55}>Overall Totals</Text></TabLabel></Tab>
          <Tab $w={400}><TabLabel><Text $color="#555" $track={-0.17}>Bar Chart - Latest Vols by Count...</Text></TabLabel></Tab>
          <Tab $w={214}><TabLabel><Text $color="#555" $track={-0.6}>Well Information</Text></TabLabel></Tab>
          <Tab $w={216}><TabLabel><Text $color="#555" $track={-0.3}>Well List for Sale</Text></TabLabel></Tab>
          <Tab $w={208} $on $pad={16}><TabIcon><DashIcon /></TabIcon><TabLabel><Text $color="#555" $weight={700} $track={-0.45}>Dashboard 1</Text></TabLabel></Tab>
          <Tab $w={208} $pad={16}><TabIcon><DashIcon /></TabIcon><TabLabel><Text $color="#555" $track={-0.35}>Dashboard 2</Text></TabLabel></Tab>
          <Tab $w={147} $pad={15}><TabIcon><StoryIcon /></TabIcon><TabLabel><Text $color="#555">Story 1</Text></TabLabel></Tab>
          <Tab $w={63} $pad={17}>
            <TabIcon>
              <svg width="30" height="30" viewBox="0 0 30 30" fill="none" stroke="#666" strokeWidth="2">
                <path d="M22 12 V1 H1 V21 H14 M6 13 V17 M11 6 V17 M16 10 V14" />
                <path d="M22 15 V29 M15 22 H29" strokeWidth="4.500" />
              </svg>
            </TabIcon>
          </Tab>
          <Tab $w={64} $pad={18}>
            <TabIcon>
              <svg width="30" height="30" viewBox="0 0 30 30" fill="none" stroke="#666" strokeWidth="2">
                <path d="M22 12 V1 H1 V21 H14 M11.500 1 V21 M1 11 H22" />
                <path d="M22 15 V29 M15 22 H29" strokeWidth="4.500" />
              </svg>
            </TabIcon>
          </Tab>
          <Tab $w={60} $pad={17}><TabIcon><StoryIcon /></TabIcon></Tab>
        </TabBar>
      </Page>
    </>
  );
}
